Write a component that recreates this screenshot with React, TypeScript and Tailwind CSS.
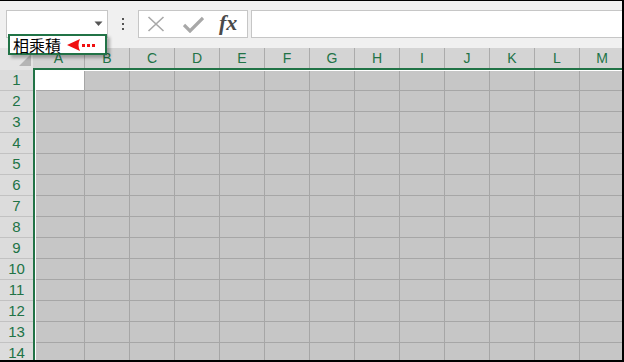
import React from "react";

const COLS = ["A", "B", "C", "D", "E", "F", "G", "H", "I", "J", "K", "L", "M"];
const ROWS = Array.from({ length: 14 }, (_, i) => i + 1);

export default function App() {
  return (
    <div
      className="relative w-[624px] h-[362px] overflow-hidden border-t border-r-2 border-b-2 border-black bg-[#f0f0f0]"
      style={{ fontFamily: '"Liberation Sans", Arial, sans-serif' }}
    >
      {/* toolbar */}
      <div className="h-[47px] flex items-start pt-[9px] pl-[6px]">
        <div className="relative w-[102px] h-[28px] bg-white border border-[#c6c6c6] shrink-0">
          <svg className="absolute left-[87px] top-[10px]" width="9" height="6" viewBox="0 0 9 6">
            <path d="M0.5 0.5 L8.5 0.5 L4.5 5 Z" fill="#555" />
          </svg>
        </div>
        <div className="w-[30px] h-[28px] flex items-center justify-center shrink-0">
          <svg width="4" height="14" viewBox="0 0 4 14">
            <rect x="1" y="1" width="2" height="2" fill="#555" />
            <rect x="1" y="6" width="2" height="2" fill="#555" />
            <rect x="1" y="11" width="2" height="2" fill="#555" />
          </svg>
        </div>
        <div className="w-[110px] h-[28px] bg-white border border-[#c6c6c6] shrink-0 flex items-center">
          <svg className="ml-[8px]" width="18" height="16" viewBox="0 0 18 16">
            <path d="M1.5 1 L16.5 15 M16.5 1 L1.5 15" stroke="#a8a8a8" strokeWidth="1.6" />
          </svg>
          <svg className="ml-[18px]" width="21" height="17" viewBox="0 0 21 17">
            <path d="M1 9 L7 15 L20 2" stroke="#a8a8a8" strokeWidth="3.2" fill="none" />
          </svg>
          <span
            className="ml-[15px] text-[22px] leading-none text-[#4a4a4a] italic font-bold -mt-[2px]"
            style={{ fontFamily: '"Liberation Serif", "Times New Roman", serif' }}
          >
            fx
          </span>
        </div>
        <div className="ml-[3px] flex-1 h-[28px] bg-white border border-[#c6c6c6] -mr-[4px]" />
      </div>

      {/* column header */}
      <div className="flex h-[22px]">
        <div className="relative w-[33px] h-[22px] bg-[#e4e4e4] shrink-0">
          <svg className="absolute left-[19px] top-[6px]" width="12" height="12" viewBox="0 0 12 12">
            <path d="M12 0 L12 12 L0 12 Z" fill="#b5b5b5" />
          </svg>
        </div>
        <div className="flex h-[22px] border-b-2 border-[#217346] bg-[#d4d4d4]">
          {COLS.map((c, i) => (
            <div
              key={c}
              className={`${i === 0 ? "w-[52px]" : "w-[45px]"} shrink-0 h-[20px] border-r border-[#ababab] flex items-center justify-center text-[14px] text-[#217346]`}
            >
              {c}
            </div>
          ))}
        </div>
      </div>

      {/* body */}
      <div className="flex">
        <div className="w-[33px] shrink-0 bg-[#dcdcdc]">
          {ROWS.map((r) => (
            <div
              key={r}
              className="h-[21px] border-b border-[#c2c2c2] flex items-center justify-center text-[15px] text-[#217346]"
            >
              {r}
            </div>
          ))}
        </div>
        <div className="w-[2px] shrink-0 bg-[#217346]" />
        <div className="border-l border-t border-white bg-[#c6c6c6]">
          {ROWS.map((r) => (
            <div key={r} className={`flex ${r === 1 ? "h-[20px]" : "h-[21px]"}`}>
              {COLS.map((c, i) => (
                <div
                  key={c}
                  className={`${i === 0 ? "w-[49px]" : "w-[45px]"} shrink-0 h-full border-r border-b border-[#a6a6a6] ${
                    r === 1 && i === 0 ? "bg-white" : ""
                  }`}
                />
              ))}
            </div>
          ))}
        </div>
      </div>

      {/* name box dropdown popup */}
      <div className="absolute left-[8px] top-[33px] w-[99px] h-[21px] bg-white border-2 border-[#217346] shadow-[3px_3px_3px_rgba(0,0,0,0.28)] flex items-center">
        <span
          className="ml-[3px] text-[16px] leading-none text-black"
          style={{ fontFamily: '"Noto Sans CJK TC", "Noto Sans CJK SC", sans-serif' }}
        >
          相乘積
        </span>
        <svg className="ml-[5px]" width="32" height="14" viewBox="0 0 32 14">
          <path d="M1 7 L14 1 Q11 7 14 13 Z" fill="#f01010" />
          <rect x="16" y="6" width="3" height="3" fill="#f01010" />
          <rect x="21" y="6" width="3" height="3" fill="#f01010" />
          <rect x="26" y="6" width="3" height="3" fill="#f01010" />
        </svg>
      </div>
    </div>
  );
}
